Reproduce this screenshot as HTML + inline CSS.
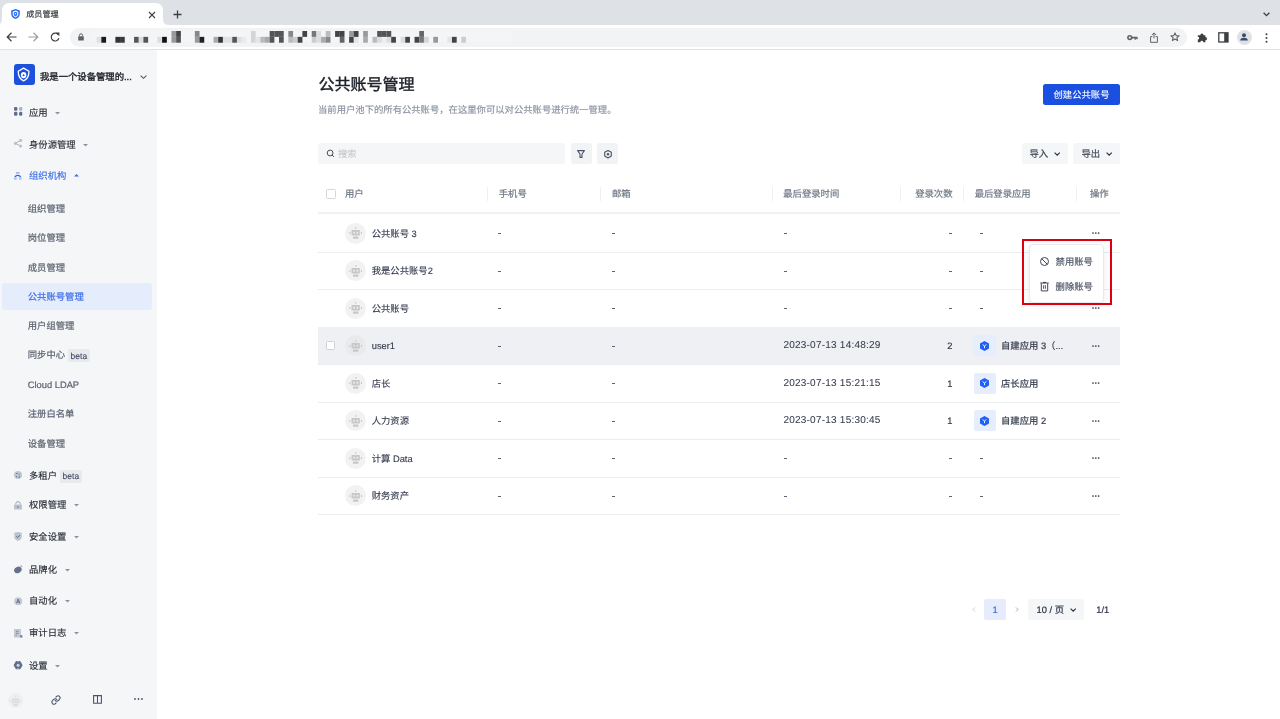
<!DOCTYPE html>
<html lang="zh-CN"><head><meta charset="utf-8"><title>成员管理</title>
<style>
html,body{margin:0;padding:0;width:1280px;height:719px;overflow:hidden;background:#fff;}
body{position:relative;font-family:"Liberation Sans",sans-serif;text-rendering:geometricPrecision;}
#root{position:absolute;left:0;top:0;width:1280px;height:719px;overflow:hidden;background:#fff;will-change:transform;}
.t{position:absolute;white-space:nowrap;}
.b{position:absolute;box-sizing:border-box;}
.s{position:absolute;overflow:visible;}
.d{letter-spacing:0.23px;font-size:10px;}
</style></head><body><div id="root">

<div class="b" style="left:0px;top:0px;width:1280px;height:25px;background:#dee1e6;border-radius:0px;"></div>
<div class="b" style="left:2px;top:2.5px;width:160.5px;height:24px;background:#fff;border-radius:7px 7px 0 0;"></div>
<svg class="s" style="left:-4px;top:19px;" width="6" height="6" viewBox="0 0 6 6"><path d="M0 6 Q6 6 6 0 V6 Z" fill="#fff"/></svg>
<svg class="s" style="left:162.5px;top:19px;" width="6" height="6" viewBox="0 0 6 6"><path d="M6 6 Q0 6 0 0 V6 Z" fill="#fff"/></svg>
<div class="b" style="left:0px;top:25px;width:1280px;height:24px;background:#fff;border-radius:0px;"></div>
<div class="b" style="left:0px;top:49px;width:1280px;height:1px;background:#e1e3e6;border-radius:0px;"></div>
<svg class="s" style="left:9.8px;top:8.0px;transform:scale(0.88);transform-origin:5.5px 5.5px;" width="11" height="12" viewBox="0 0 11 12"><path d="M5.5 0.3 L10.4 2.2 V6 C10.4 9 8.3 10.9 5.5 11.8 C2.7 10.9 0.6 9 0.6 6 V2.2 Z" fill="#2b6cf0"/><path d="M5.5 2.2 L8.7 3.4 V6.1 C8.7 8 7.4 9.3 5.5 10 C3.6 9.3 2.3 8 2.3 6.1 V3.4 Z" fill="#fff"/><path d="M5.5 3.6 L7.5 4.4 V6.2 C7.5 7.4 6.7 8.3 5.5 8.8 C4.3 8.3 3.5 7.4 3.5 6.2 V4.4 Z" fill="#2b6cf0"/><circle cx="5.5" cy="5.8" r="0.8" fill="#fff"/></svg>
<div class="t" style="left:26.20px;top:8.00px;font-size:8.1px;line-height:14px;color:#35383c;font-weight:400;-webkit-text-stroke:0.18px #35383c;">成员管理</div>
<svg class="s" style="left:148px;top:10.5px;" width="8" height="8" viewBox="0 0 8 8"><path d="M1 1 L7 7 M7 1 L1 7" stroke="#3c4043" stroke-width="1.1"/></svg>
<svg class="s" style="left:172.5px;top:9.5px;" width="9" height="9" viewBox="0 0 9 9"><path d="M4.5 0.5 V8.5 M0.5 4.5 H8.5" stroke="#3c4043" stroke-width="1.3"/></svg>
<svg class="s" style="left:1262.5px;top:11.8px;" width="7" height="5" viewBox="0 0 7 5"><path d="M0.6 0.8 L3.5 3.7 L6.4 0.8" stroke="#3c4043" stroke-width="1.3" fill="none"/></svg>
<svg class="s" style="left:6px;top:32px;" width="11" height="10" viewBox="0 0 11 10"><path d="M10.5 5 H1.5 M5.5 0.8 L1.2 5 L5.5 9.2" stroke="#3c4043" stroke-width="1.2" fill="none"/></svg>
<svg class="s" style="left:28px;top:32px;" width="11" height="10" viewBox="0 0 11 10"><path d="M0.5 5 H9.5 M5.5 0.8 L9.8 5 L5.5 9.2" stroke="#9aa0a6" stroke-width="1.2" fill="none"/></svg>
<svg class="s" style="left:49.5px;top:32px;" width="10" height="10" viewBox="0 0 10 10"><path d="M8.6 3.2 A3.9 3.9 0 1 0 8.9 6.2" stroke="#3c4043" stroke-width="1.2" fill="none"/><path d="M6 0.6 L9.4 0.6 L9.4 4 Z" fill="#3c4043"/></svg>
<div class="b" style="left:69.5px;top:28.2px;width:1117.5px;height:18.5px;background:#f1f3f4;border-radius:9.25px;"></div>
<svg class="s" style="left:78.2px;top:33.2px;" width="6" height="8" viewBox="0 0 6 8"><path d="M1.4 3.4 V2.4 A1.6 1.6 0 0 1 4.6 2.4 V3.4" stroke="#5f6368" stroke-width="1" fill="none"/><rect x="0.2" y="3.3" width="5.6" height="4.3" rx="0.7" fill="#5f6368"/></svg>
<div class="b" style="left:92px;top:31.1px;width:420px;height:11.4px;background:#f4f5f6;border-radius:0px;"></div>
<svg class="s" style="left:92px;top:31.1px;" width="380" height="12" viewBox="0 0 380 12"><rect x="4.67" y="5.85" width="4.72" height="5.87" fill="#e0e0e0"/><rect x="9.35" y="5.85" width="4.72" height="5.87" fill="#1a1a1a"/><rect x="23.38" y="5.85" width="4.72" height="5.87" fill="#333"/><rect x="28.05" y="5.85" width="4.72" height="5.87" fill="#3a3a3a"/><rect x="42.07" y="5.85" width="4.72" height="5.87" fill="#555"/><rect x="46.75" y="5.85" width="4.72" height="5.87" fill="#ddd"/><rect x="51.42" y="5.85" width="4.72" height="5.87" fill="#555"/><rect x="65.45" y="5.85" width="4.72" height="5.87" fill="#ddd"/><rect x="70.12" y="5.85" width="4.72" height="5.87" fill="#111"/><rect x="79.47" y="5.85" width="4.72" height="5.87" fill="#999"/><rect x="84.15" y="5.85" width="4.72" height="5.87" fill="#555"/><rect x="102.85" y="5.85" width="4.72" height="5.87" fill="#999"/><rect x="107.52" y="5.85" width="4.72" height="5.87" fill="#222"/><rect x="121.55" y="5.85" width="4.72" height="5.87" fill="#aaa"/><rect x="126.22" y="5.85" width="4.72" height="5.87" fill="#333"/><rect x="130.90" y="5.85" width="4.72" height="5.87" fill="#e0e0e0"/><rect x="135.57" y="5.85" width="4.72" height="5.87" fill="#e0e0e0"/><rect x="140.25" y="5.85" width="4.72" height="5.87" fill="#555"/><rect x="144.92" y="5.85" width="4.72" height="5.87" fill="#ddd"/><rect x="149.60" y="5.85" width="4.72" height="5.87" fill="#eaeaea"/><rect x="158.95" y="5.85" width="4.72" height="5.87" fill="#d5d5d5"/><rect x="163.62" y="5.85" width="4.72" height="5.87" fill="#e5e5e5"/><rect x="168.30" y="5.85" width="4.72" height="5.87" fill="#bbb"/><rect x="172.97" y="5.85" width="4.72" height="5.87" fill="#aaa"/><rect x="177.65" y="5.85" width="4.72" height="5.87" fill="#555"/><rect x="187.00" y="5.85" width="4.72" height="5.87" fill="#555"/><rect x="196.35" y="5.85" width="4.72" height="5.87" fill="#bbb"/><rect x="201.03" y="5.85" width="4.72" height="5.87" fill="#ccc"/><rect x="205.70" y="5.85" width="4.72" height="5.87" fill="#444"/><rect x="219.72" y="5.85" width="4.72" height="5.87" fill="#ccc"/><rect x="224.40" y="5.85" width="4.72" height="5.87" fill="#ddd"/><rect x="229.07" y="5.85" width="4.72" height="5.87" fill="#aaa"/><rect x="233.75" y="5.85" width="4.72" height="5.87" fill="#888"/><rect x="247.77" y="5.85" width="4.72" height="5.87" fill="#666"/><rect x="257.12" y="5.85" width="4.72" height="5.87" fill="#444"/><rect x="261.80" y="5.85" width="4.72" height="5.87" fill="#e5e5e5"/><rect x="271.15" y="5.85" width="4.72" height="5.87" fill="#aaa"/><rect x="280.50" y="5.85" width="4.72" height="5.87" fill="#bbb"/><rect x="285.18" y="5.85" width="4.72" height="5.87" fill="#ddd"/><rect x="289.85" y="5.85" width="4.72" height="5.87" fill="#eee"/><rect x="294.52" y="5.85" width="4.72" height="5.87" fill="#ddd"/><rect x="299.20" y="5.85" width="4.72" height="5.87" fill="#444"/><rect x="308.55" y="5.85" width="4.72" height="5.87" fill="#ddd"/><rect x="313.22" y="5.85" width="4.72" height="5.87" fill="#444"/><rect x="322.57" y="5.85" width="4.72" height="5.87" fill="#444"/><rect x="327.25" y="5.85" width="4.72" height="5.87" fill="#777"/><rect x="331.93" y="5.85" width="4.72" height="5.87" fill="#d5d5d5"/><rect x="341.27" y="5.85" width="4.72" height="5.87" fill="#999"/><rect x="355.30" y="5.85" width="4.72" height="5.87" fill="#e5e5e5"/><rect x="359.97" y="5.85" width="4.72" height="5.87" fill="#444"/><rect x="369.32" y="5.85" width="4.72" height="5.87" fill="#ccc"/><rect x="79.47" y="0" width="4.72" height="5.87" fill="#999"/><rect x="84.15" y="0" width="4.72" height="5.87" fill="#444"/><rect x="102.85" y="0" width="4.72" height="5.87" fill="#888"/><rect x="158.95" y="0" width="4.72" height="5.87" fill="#d5d5d5"/><rect x="177.65" y="0" width="4.72" height="5.87" fill="#555"/><rect x="182.32" y="0" width="4.72" height="5.87" fill="#555"/><rect x="187.00" y="0" width="4.72" height="5.87" fill="#555"/><rect x="196.35" y="0" width="4.72" height="5.87" fill="#888"/><rect x="210.38" y="0" width="4.72" height="5.87" fill="#444"/><rect x="219.72" y="0" width="4.72" height="5.87" fill="#777"/><rect x="224.40" y="0" width="4.72" height="5.87" fill="#ddd"/><rect x="233.75" y="0" width="4.72" height="5.87" fill="#bbb"/><rect x="243.10" y="0" width="4.72" height="5.87" fill="#444"/><rect x="247.77" y="0" width="4.72" height="5.87" fill="#444"/><rect x="257.12" y="0" width="4.72" height="5.87" fill="#999"/><rect x="261.80" y="0" width="4.72" height="5.87" fill="#444"/><rect x="271.15" y="0" width="4.72" height="5.87" fill="#999"/><rect x="285.18" y="0" width="4.72" height="5.87" fill="#555"/><rect x="289.85" y="0" width="4.72" height="5.87" fill="#555"/><rect x="294.52" y="0" width="4.72" height="5.87" fill="#555"/><rect x="327.25" y="0" width="4.72" height="5.87" fill="#666"/></svg>
<svg class="s" style="left:1127px;top:33.6px;" width="11" height="8" viewBox="0 0 11 8"><circle cx="2.8" cy="3.6" r="1.9" stroke="#5f6368" stroke-width="1.6" fill="none"/><path d="M4.6 3.6 H10.4" stroke="#5f6368" stroke-width="1.7"/><path d="M8.2 3.6 V5.8 M10 3.6 V5.2" stroke="#5f6368" stroke-width="1.3"/></svg>
<svg class="s" style="left:1149.5px;top:32px;" width="8" height="11" viewBox="0 0 8 11"><path d="M4 6.4 V1 M1.9 3 L4 0.9 L6.1 3" stroke="#5f6368" stroke-width="1" fill="none"/><path d="M2.4 4.6 H0.6 V10.3 H7.4 V4.6 H5.6" stroke="#5f6368" stroke-width="1" fill="none"/></svg>
<svg class="s" style="left:1170px;top:32.3px;" width="10" height="10" viewBox="0 0 10 10"><path d="M5 0.9 L6.2 3.6 L9.1 3.8 L6.9 5.7 L7.6 8.6 L5 7.1 L2.4 8.6 L3.1 5.7 L0.9 3.8 L3.8 3.6 Z" stroke="#5f6368" stroke-width="1.1" fill="none" stroke-linejoin="round"/></svg>
<svg class="s" style="left:1196.5px;top:32.2px;" width="11" height="11" viewBox="0 0 11 11"><path d="M0.8 3.2 H3.3 A1.6 1.6 0 1 1 6.5 3.2 H8.4 V5.1 A1.6 1.6 0 1 1 8.4 8.3 V10.2 H6.2 A1.4 1.4 0 1 0 3.4 10.2 H0.8 V7.6 A1.4 1.4 0 1 0 0.8 4.8 Z" fill="#3c4043"/></svg>
<svg class="s" style="left:1217.8px;top:32.3px;" width="11" height="11" viewBox="0 0 11 11"><rect x="0.8" y="0.8" width="9.2" height="9.2" stroke="#3c4043" stroke-width="1.3" fill="none"/><rect x="6.2" y="0.8" width="3.8" height="9.2" fill="#3c4043"/></svg>
<div class="b" style="left:1236.9px;top:29.9px;width:15px;height:15px;border-radius:50%;background:#dfe1e5;"></div>
<svg class="s" style="left:1239.4px;top:32.4px;" width="10" height="10" viewBox="0 0 10 10"><circle cx="5" cy="3.2" r="2" fill="#394a6d"/><path d="M1.2 8.4 C1.2 6.4 3 5.7 5 5.7 C7 5.7 8.8 6.4 8.8 8.4 Z" fill="#394a6d"/></svg>
<svg class="s" style="left:1264.5px;top:32.5px;" width="3" height="11" viewBox="0 0 3 11"><circle cx="1.5" cy="1.2" r="1" fill="#3c4043"/><circle cx="1.5" cy="5" r="1" fill="#3c4043"/><circle cx="1.5" cy="8.8" r="1" fill="#3c4043"/></svg>
<div class="b" style="left:0px;top:50px;width:157px;height:669px;background:#f5f6f8;border-radius:0px;"></div>
<div class="b" style="left:13.5px;top:64px;width:21.3px;height:21.3px;background:#1d50dc;border-radius:3px;"></div>
<svg class="s" style="left:13.4px;top:64.1px;" width="21.4" height="21.2" viewBox="0 0 21.4 21.2"><path d="M10.6 4.1 L16 7.3 C16 12 14 15.4 10.6 16.9 C7.2 15.4 5.2 12 5.2 7.3 Z" stroke="#fff" stroke-width="1.3" fill="none" stroke-linejoin="round"/><ellipse cx="10.6" cy="11.1" rx="2.7" ry="3.2" fill="#fff"/><circle cx="10.6" cy="11.2" r="1" fill="#1d50dc"/></svg>
<div class="t" style="left:40.00px;top:69.70px;font-size:9.33px;line-height:14px;color:#1f2329;font-weight:400;-webkit-text-stroke:0.38px #1f2329;">我是一个设备管理的...</div>
<svg class="s" style="left:140px;top:74.6px;" width="7" height="4" viewBox="0 0 7 4"><path d="M0.6 0.6 L3.5 3.3 L6.4 0.6" stroke="#4e5565" stroke-width="1.1" fill="none"/></svg>
<div class="t" style="left:29.00px;top:105.90px;font-size:9.33px;line-height:14px;color:#2b2f38;font-weight:400;-webkit-text-stroke:0.15px #2b2f38;">应用</div>
<svg class="s" style="left:13.8px;top:107.1px;" width="9" height="9" viewBox="0 0 9 9"><rect x="0" y="0" width="3.4" height="3.7" rx="1.3" fill="#5f6d8c"/><rect x="5.1" y="0" width="3.2" height="3.7" rx="1.3" fill="#a9b1c3"/><rect x="0" y="4.8" width="3.4" height="3.9" rx="1.3" fill="#5f6d8c"/><rect x="5.1" y="4.8" width="3.2" height="3.9" rx="1.3" fill="#5f6d8c"/></svg>
<svg class="s" style="left:55.0px;top:111.7px;" width="5" height="3" viewBox="0 0 5 3"><path d="M0 0 H5 L2.5 2.6 Z" fill="#8a93a6"/></svg>
<div class="t" style="left:29.00px;top:137.80px;font-size:9.33px;line-height:14px;color:#2b2f38;font-weight:400;-webkit-text-stroke:0.15px #2b2f38;">身份源管理</div>
<svg class="s" style="left:13.8px;top:139.3px;" width="9" height="9" viewBox="0 0 9 9"><path d="M1.3 4.3 L6.6 1.3 M1.3 4.3 L6.6 7" stroke="#98a1b3" stroke-width="0.8"/><circle cx="1.4" cy="4.3" r="1.6" fill="#b9c0ce"/><circle cx="6.6" cy="1.3" r="1.6" fill="#b9c0ce"/><circle cx="6.6" cy="7" r="1.6" fill="#b9c0ce"/></svg>
<svg class="s" style="left:83.0px;top:143.6px;" width="5" height="3" viewBox="0 0 5 3"><path d="M0 0 H5 L2.5 2.6 Z" fill="#8a93a6"/></svg>
<div class="t" style="left:29.00px;top:169.40px;font-size:9.33px;line-height:14px;color:#3f6fe8;font-weight:400;-webkit-text-stroke:0.15px #3f6fe8;">组织机构</div>
<svg class="s" style="left:14.2px;top:172.1px;" width="9" height="9" viewBox="0 0 9 9"><rect x="1.8" y="0" width="3.9" height="1.7" rx="0.4" fill="#a3b8f3"/><path d="M1.2 4.5 Q3.75 2.3 6.3 4.5" stroke="#2f62e8" stroke-width="1.3" fill="none" stroke-linecap="round"/><rect x="0" y="5.2" width="2.7" height="2.5" rx="0.4" fill="#adc1f5"/><rect x="4.9" y="5.2" width="2.7" height="2.5" rx="0.4" fill="#adc1f5"/></svg>
<svg class="s" style="left:73.5px;top:174.2px;" width="5" height="3" viewBox="0 0 5 3"><path d="M0 2.6 H5 L2.5 0 Z" fill="#3f6fe8"/></svg>
<div class="t" style="left:29.00px;top:469.00px;font-size:9.33px;line-height:14px;color:#2b2f38;font-weight:400;-webkit-text-stroke:0.15px #2b2f38;">多租户</div>
<svg class="s" style="left:14px;top:470.7px;" width="9" height="9" viewBox="0 0 9 9"><circle cx="4" cy="4" r="4" fill="#bfc5d1"/><path d="M2.2 2.5 L3.4 2.5 M4.8 3.2 L5.6 3.2 M2 5.8 L3 5.8 M4.6 6.2 L6 5.8" stroke="#5a6686" stroke-width="1.1"/></svg>
<div class="t" style="left:29.00px;top:498.40px;font-size:9.33px;line-height:14px;color:#2b2f38;font-weight:400;-webkit-text-stroke:0.15px #2b2f38;">权限管理</div>
<svg class="s" style="left:14px;top:500.8px;" width="9" height="9" viewBox="0 0 9 9"><path d="M1.8 3.6 V2.8 A2.2 2.2 0 0 1 6.2 2.8 V3.6" stroke="#9aa2b3" stroke-width="1" fill="none"/><rect x="0" y="3.6" width="8" height="5" rx="0.5" fill="#bcc3cf"/><path d="M4 5 V7" stroke="#6c7690" stroke-width="1"/></svg>
<svg class="s" style="left:73.5px;top:504.2px;" width="5" height="3" viewBox="0 0 5 3"><path d="M0 0 H5 L2.5 2.6 Z" fill="#8a93a6"/></svg>
<div class="t" style="left:29.00px;top:530.40px;font-size:9.33px;line-height:14px;color:#2b2f38;font-weight:400;-webkit-text-stroke:0.15px #2b2f38;">安全设置</div>
<svg class="s" style="left:14.2px;top:532.3px;" width="9" height="9" viewBox="0 0 9 9"><path d="M0.3 0.8 L4 0 L7.7 0.8 V5 C7.7 7 5.8 8.3 4 9 C2.2 8.3 0.3 7 0.3 5 Z" fill="#bcc3cf"/><path d="M2.2 4.3 L3.6 5.6 L5.9 3.2" stroke="#5c6888" stroke-width="1" fill="none"/></svg>
<svg class="s" style="left:73.5px;top:536.2px;" width="5" height="3" viewBox="0 0 5 3"><path d="M0 0 H5 L2.5 2.6 Z" fill="#8a93a6"/></svg>
<div class="t" style="left:29.00px;top:562.80px;font-size:9.33px;line-height:14px;color:#2b2f38;font-weight:400;-webkit-text-stroke:0.15px #2b2f38;">品牌化</div>
<svg class="s" style="left:13.6px;top:565px;" width="9" height="9" viewBox="0 0 9 9"><ellipse cx="3.9" cy="4.9" rx="3.9" ry="3.1" transform="rotate(-28 3.9 4.9)" fill="#66718f"/><circle cx="7.3" cy="1.2" r="1" fill="#aab2c2"/></svg>
<svg class="s" style="left:64.5px;top:568.6px;" width="5" height="3" viewBox="0 0 5 3"><path d="M0 0 H5 L2.5 2.6 Z" fill="#8a93a6"/></svg>
<div class="t" style="left:29.00px;top:594.40px;font-size:9.33px;line-height:14px;color:#2b2f38;font-weight:400;-webkit-text-stroke:0.15px #2b2f38;">自动化</div>
<svg class="s" style="left:13.8px;top:596.8px;" width="9" height="9" viewBox="0 0 9 9"><circle cx="4.2" cy="4.2" r="4" fill="#c3c8d3"/><path d="M2.6 6.3 L4.2 2.1 L5.8 6.3 M3.2 5 H5.2" stroke="#5a6686" stroke-width="0.9" fill="none"/></svg>
<svg class="s" style="left:64.5px;top:600.2px;" width="5" height="3" viewBox="0 0 5 3"><path d="M0 0 H5 L2.5 2.6 Z" fill="#8a93a6"/></svg>
<div class="t" style="left:29.00px;top:626.40px;font-size:9.33px;line-height:14px;color:#2b2f38;font-weight:400;-webkit-text-stroke:0.15px #2b2f38;">审计日志</div>
<svg class="s" style="left:14px;top:629px;" width="9" height="9" viewBox="0 0 9 9"><rect x="0" y="0" width="7" height="8.5" rx="0.3" fill="#c3c8d3"/><path d="M2 2.3 H4.5 M2 4.3 H4.5 M1.6 6.3 H2.8" stroke="#7c869c" stroke-width="0.9"/><rect x="6.2" y="6.3" width="2.2" height="2.2" rx="0.5" fill="#6b7694"/></svg>
<svg class="s" style="left:73.5px;top:632.2px;" width="5" height="3" viewBox="0 0 5 3"><path d="M0 0 H5 L2.5 2.6 Z" fill="#8a93a6"/></svg>
<div class="t" style="left:29.00px;top:659.00px;font-size:9.33px;line-height:14px;color:#2b2f38;font-weight:400;-webkit-text-stroke:0.15px #2b2f38;">设置</div>
<svg class="s" style="left:14px;top:661.4px;" width="9" height="9" viewBox="0 0 9 9"><path d="M2.3 0.6 H5.9 L8 4.2 L5.9 7.8 H2.3 L0.2 4.2 Z" fill="#5f6d8c" stroke="#5f6d8c" stroke-width="1.1" stroke-linejoin="round"/><path d="M4.1 0 V1.2 M4.1 7.2 V8.4" stroke="#f5f6f8" stroke-width="0.7"/><circle cx="4.1" cy="4.2" r="1.5" fill="#d5d9e2"/></svg>
<svg class="s" style="left:55.0px;top:664.8000000000001px;" width="5" height="3" viewBox="0 0 5 3"><path d="M0 0 H5 L2.5 2.6 Z" fill="#8a93a6"/></svg>
<div class="b" style="left:59.5px;top:469.8px;width:22.5px;height:13.1px;background:#e8eaee;border-radius:2px;"></div>
<div class="t" style="left:62.60px;top:469.30px;font-size:8.5px;line-height:14px;color:#404860;font-weight:400;-webkit-text-stroke:0.1px #404860;">beta</div>
<div class="b" style="left:2px;top:283px;width:150px;height:26.8px;background:#e5ecfb;border-radius:3px;"></div>
<div class="t" style="left:27.75px;top:201.90px;font-size:9.33px;line-height:14px;color:#5c6370;font-weight:400;-webkit-text-stroke:0.2px #5c6370;">组织管理</div>
<div class="t" style="left:27.75px;top:231.40px;font-size:9.33px;line-height:14px;color:#5c6370;font-weight:400;-webkit-text-stroke:0.2px #5c6370;">岗位管理</div>
<div class="t" style="left:27.75px;top:260.90px;font-size:9.33px;line-height:14px;color:#5c6370;font-weight:400;-webkit-text-stroke:0.2px #5c6370;">成员管理</div>
<div class="t" style="left:27.75px;top:290.40px;font-size:9.33px;line-height:14px;color:#3f6fe8;font-weight:400;-webkit-text-stroke:0.2px #3f6fe8;">公共账号管理</div>
<div class="t" style="left:27.75px;top:319.40px;font-size:9.33px;line-height:14px;color:#5c6370;font-weight:400;-webkit-text-stroke:0.2px #5c6370;">用户组管理</div>
<div class="t" style="left:27.75px;top:348.40px;font-size:9.33px;line-height:14px;color:#5c6370;font-weight:400;-webkit-text-stroke:0.2px #5c6370;">同步中心</div>
<div class="t" style="left:27.75px;top:378.40px;font-size:9.33px;line-height:14px;color:#5c6370;font-weight:400;-webkit-text-stroke:0.2px #5c6370;">Cloud LDAP</div>
<div class="t" style="left:27.75px;top:407.40px;font-size:9.33px;line-height:14px;color:#5c6370;font-weight:400;-webkit-text-stroke:0.2px #5c6370;">注册白名单</div>
<div class="t" style="left:27.75px;top:436.90px;font-size:9.33px;line-height:14px;color:#5c6370;font-weight:400;-webkit-text-stroke:0.2px #5c6370;">设备管理</div>
<div class="b" style="left:67.5px;top:349.4px;width:22.3px;height:13.1px;background:#e8eaee;border-radius:2px;"></div>
<div class="t" style="left:70.60px;top:348.90px;font-size:8.5px;line-height:14px;color:#404860;font-weight:400;-webkit-text-stroke:0.1px #404860;">beta</div>
<div class="b" style="left:7.9px;top:692.5px;width:15px;height:15px;border-radius:50%;background:#eeeff1;"></div>
<svg class="s" style="left:9.3px;top:694.6px;transform:scale(0.85);transform-origin:6.5px 6px;" width="13" height="12" viewBox="0 0 13 12"><rect x="6" y="0.2" width="1.3" height="1.4" fill="#dcdcde"/><rect x="2.5" y="3" width="8.3" height="5.6" rx="0.5" fill="#dcdcde"/><rect x="4.3" y="4.8" width="1.5" height="1.8" fill="#eeeff1"/><rect x="7.6" y="4.8" width="1.5" height="1.8" fill="#eeeff1"/><rect x="0.3" y="5" width="1.1" height="2" rx="0.3" fill="#dcdcde"/><rect x="11.9" y="5" width="1.1" height="2" rx="0.3" fill="#dcdcde"/><rect x="4" y="9.4" width="5.4" height="2.4" rx="0.5" fill="#dcdcde"/></svg>
<svg class="s" style="left:51.2px;top:694.8px" width="10" height="10" viewBox="0 0 24 24"><path d="M10 13a5 5 0 0 0 7.54.54l3-3a5 5 0 0 0-7.07-7.07l-1.72 1.71" stroke="#4a5470" stroke-width="2.6" fill="none" stroke-linecap="round"/><path d="M14 11a5 5 0 0 0-7.54-.54l-3 3a5 5 0 0 0 7.07 7.07l1.71-1.71" stroke="#4a5470" stroke-width="2.6" fill="none" stroke-linecap="round"/></svg>
<svg class="s" style="left:93px;top:695.3px;" width="9" height="9" viewBox="0 0 9 9"><path d="M0.6 0.6 H8.4 V8.2 H0.6 Z M4.5 0.6 V8.8" stroke="#4a5470" stroke-width="1.1" fill="none"/></svg>
<svg class="s" style="left:134px;top:698.3px;" width="9" height="2" viewBox="0 0 9 2"><circle cx="1" cy="1" r="0.9" fill="#4a5470"/><circle cx="4.5" cy="1" r="0.9" fill="#4a5470"/><circle cx="8" cy="1" r="0.9" fill="#4a5470"/></svg>
<div class="t" style="left:318.50px;top:75.40px;font-size:16px;line-height:22px;color:#1d2129;font-weight:400;-webkit-text-stroke:0.42px #1d2129;">公共账号管理</div>
<div class="t" style="left:318.00px;top:103.00px;font-size:9.33px;line-height:14px;color:#8a919f;font-weight:400;-webkit-text-stroke:0.15px #8a919f;">当前用户池下的所有公共账号，在这里你可以对公共账号进行统一管理。</div>
<div class="b" style="left:1042.7px;top:83.5px;width:77.3px;height:21.3px;background:#1a4fdf;border-radius:2.5px;"></div>
<div class="t" style="left:1053.50px;top:87.70px;font-size:9.33px;line-height:14px;color:#fff;font-weight:400;-webkit-text-stroke:0.1px #fff;">创建公共账号</div>
<div class="b" style="left:318px;top:143.3px;width:247px;height:20.7px;background:#f5f6f8;border-radius:2.5px;"></div>
<svg class="s" style="left:325.5px;top:149px;" width="9" height="9" viewBox="0 0 9 9"><circle cx="4.1" cy="4" r="2.9" stroke="#4d4f55" stroke-width="1" fill="none"/><path d="M6.2 6.1 L7.8 7.7" stroke="#4d4f55" stroke-width="1" stroke-linecap="round"/></svg>
<div class="t" style="left:338.00px;top:147.00px;font-size:9.33px;line-height:14px;color:#c2c4c8;font-weight:400;-webkit-text-stroke:0.05px #c2c4c8;">搜索</div>
<div class="b" style="left:570.9px;top:143.3px;width:20.7px;height:20.7px;background:#f2f3f5;border-radius:2.5px;"></div>
<div class="b" style="left:597.4px;top:143.3px;width:21px;height:20.7px;background:#f2f3f5;border-radius:2.5px;"></div>
<svg class="s" style="left:577.3px;top:149.8px;" width="8" height="8" viewBox="0 0 8 8"><path d="M0.6 0.6 H7.4 L5 4 V7.4 H3 V4 Z" stroke="#4a5268" stroke-width="1.1" fill="none" stroke-linejoin="round"/></svg>
<svg class="s" style="left:603.8px;top:149.6px;" width="8" height="8.5" viewBox="0 0 8 8.5"><path d="M4 0.5 L7.3 2.3 V6.1 L4 7.9 L0.7 6.1 V2.3 Z" stroke="#4a5268" stroke-width="1.1" fill="none" stroke-linejoin="round"/><circle cx="4" cy="4.2" r="1.2" fill="#4a5268"/></svg>
<div class="b" style="left:1021.5px;top:143.3px;width:46.4px;height:20.7px;background:#f5f6f8;border-radius:2.5px;"></div>
<div class="b" style="left:1073.4px;top:143.3px;width:46.6px;height:20.7px;background:#f5f6f8;border-radius:2.5px;"></div>
<svg class="s" style="left:1053.5px;top:152px;" width="6.5" height="4" viewBox="0 0 6.5 4"><path d="M0.6 0.6 L3.2 3.1 L5.8 0.6" stroke="#2d3446" stroke-width="1.2" fill="none"/></svg>
<svg class="s" style="left:1105.5px;top:152px;" width="6.5" height="4" viewBox="0 0 6.5 4"><path d="M0.6 0.6 L3.2 3.1 L5.8 0.6" stroke="#2d3446" stroke-width="1.2" fill="none"/></svg>
<div class="t" style="left:1029.50px;top:147.00px;font-size:9.33px;line-height:14px;color:#444b59;font-weight:400;-webkit-text-stroke:0.2px #444b59;">导入</div>
<div class="t" style="left:1081.50px;top:147.00px;font-size:9.33px;line-height:14px;color:#444b59;font-weight:400;-webkit-text-stroke:0.2px #444b59;">导出</div>
<div class="t" style="left:345.00px;top:187.15px;font-size:9.33px;line-height:14px;color:#6f7785;font-weight:400;-webkit-text-stroke:0.2px #6f7785;">用户</div>
<div class="t" style="left:498.75px;top:187.15px;font-size:9.33px;line-height:14px;color:#6f7785;font-weight:400;-webkit-text-stroke:0.2px #6f7785;">手机号</div>
<div class="t" style="left:612.00px;top:187.15px;font-size:9.33px;line-height:14px;color:#6f7785;font-weight:400;-webkit-text-stroke:0.2px #6f7785;">邮箱</div>
<div class="t" style="left:783.25px;top:187.15px;font-size:9.33px;line-height:14px;color:#6f7785;font-weight:400;-webkit-text-stroke:0.2px #6f7785;">最后登录时间</div>
<div class="t" style="right:327.50px;top:187.15px;font-size:9.33px;line-height:14px;color:#6f7785;font-weight:400;-webkit-text-stroke:0.2px #6f7785;">登录次数</div>
<div class="t" style="left:974.70px;top:187.15px;font-size:9.33px;line-height:14px;color:#6f7785;font-weight:400;-webkit-text-stroke:0.2px #6f7785;">最后登录应用</div>
<div class="t" style="left:1090.00px;top:187.15px;font-size:9.33px;line-height:14px;color:#6f7785;font-weight:400;-webkit-text-stroke:0.2px #6f7785;">操作</div>
<div class="b" style="left:487px;top:186.5px;width:1px;height:14px;background:#eef0f3;border-radius:0px;"></div>
<div class="b" style="left:600px;top:186.5px;width:1px;height:14px;background:#eef0f3;border-radius:0px;"></div>
<div class="b" style="left:772px;top:186.5px;width:1px;height:14px;background:#eef0f3;border-radius:0px;"></div>
<div class="b" style="left:900px;top:186.5px;width:1px;height:14px;background:#eef0f3;border-radius:0px;"></div>
<div class="b" style="left:963px;top:186.5px;width:1px;height:14px;background:#eef0f3;border-radius:0px;"></div>
<div class="b" style="left:1076px;top:186.5px;width:1px;height:14px;background:#eef0f3;border-radius:0px;"></div>
<div class="b" style="left:318px;top:212.3px;width:802px;height:2px;background:#f0f2f5;border-radius:0px;"></div>
<div class="b" style="left:318px;top:251.5px;width:802px;height:0.7px;background:#ebedf0;border-radius:0px;"></div>
<div class="b" style="left:344.7px;top:222.75px;width:21px;height:21px;border-radius:50%;background:#f2f2f3;"></div>
<svg class="s" style="left:348.6px;top:227.05px;" width="13" height="12" viewBox="0 0 13 12"><rect x="6" y="0.2" width="1.3" height="1.4" fill="#c6c7c9"/><rect x="2.5" y="3" width="8.3" height="5.6" rx="0.5" fill="#c6c7c9"/><rect x="4.3" y="4.8" width="1.5" height="1.8" fill="#f2f2f3"/><rect x="7.6" y="4.8" width="1.5" height="1.8" fill="#f2f2f3"/><rect x="0.3" y="5" width="1.1" height="2" rx="0.3" fill="#c6c7c9"/><rect x="11.9" y="5" width="1.1" height="2" rx="0.3" fill="#c6c7c9"/><rect x="4" y="9.4" width="5.4" height="2.4" rx="0.5" fill="#c6c7c9"/></svg>
<div class="t" style="left:371.70px;top:226.65px;font-size:9.33px;line-height:14px;color:#343b4d;font-weight:400;-webkit-text-stroke:0.12px #343b4d;">公共账号 3</div>
<div class="b" style="left:498.4px;top:233.1px;width:3.1px;height:1.1px;background:#5a6172;border-radius:0px;"></div>
<div class="b" style="left:612.4000000000001px;top:233.1px;width:3.1px;height:1.1px;background:#5a6172;border-radius:0px;"></div>
<div class="b" style="left:783.6px;top:233.1px;width:3.1px;height:1.1px;background:#5a6172;border-radius:0px;"></div>
<div class="b" style="left:949.2px;top:233.1px;width:3.1px;height:1.1px;background:#5a6172;border-radius:0px;"></div>
<div class="b" style="left:980.2px;top:233.1px;width:3.1px;height:1.1px;background:#5a6172;border-radius:0px;"></div>
<svg class="s" style="left:1092.3px;top:232.35px;" width="8" height="2" viewBox="0 0 8 2"><circle cx="1" cy="1" r="0.85" fill="#2d3446"/><circle cx="3.8" cy="1" r="0.85" fill="#2d3446"/><circle cx="6.6" cy="1" r="0.85" fill="#2d3446"/></svg>
<div class="b" style="left:318px;top:289.0px;width:802px;height:0.7px;background:#ebedf0;border-radius:0px;"></div>
<div class="b" style="left:344.7px;top:260.25px;width:21px;height:21px;border-radius:50%;background:#f2f2f3;"></div>
<svg class="s" style="left:348.6px;top:264.55px;" width="13" height="12" viewBox="0 0 13 12"><rect x="6" y="0.2" width="1.3" height="1.4" fill="#c6c7c9"/><rect x="2.5" y="3" width="8.3" height="5.6" rx="0.5" fill="#c6c7c9"/><rect x="4.3" y="4.8" width="1.5" height="1.8" fill="#f2f2f3"/><rect x="7.6" y="4.8" width="1.5" height="1.8" fill="#f2f2f3"/><rect x="0.3" y="5" width="1.1" height="2" rx="0.3" fill="#c6c7c9"/><rect x="11.9" y="5" width="1.1" height="2" rx="0.3" fill="#c6c7c9"/><rect x="4" y="9.4" width="5.4" height="2.4" rx="0.5" fill="#c6c7c9"/></svg>
<div class="t" style="left:371.70px;top:264.15px;font-size:9.33px;line-height:14px;color:#343b4d;font-weight:400;-webkit-text-stroke:0.12px #343b4d;">我是公共账号2</div>
<div class="b" style="left:498.4px;top:270.6px;width:3.1px;height:1.1px;background:#5a6172;border-radius:0px;"></div>
<div class="b" style="left:612.4000000000001px;top:270.6px;width:3.1px;height:1.1px;background:#5a6172;border-radius:0px;"></div>
<div class="b" style="left:783.6px;top:270.6px;width:3.1px;height:1.1px;background:#5a6172;border-radius:0px;"></div>
<div class="b" style="left:949.2px;top:270.6px;width:3.1px;height:1.1px;background:#5a6172;border-radius:0px;"></div>
<div class="b" style="left:980.2px;top:270.6px;width:3.1px;height:1.1px;background:#5a6172;border-radius:0px;"></div>
<svg class="s" style="left:1092.3px;top:269.85px;" width="8" height="2" viewBox="0 0 8 2"><circle cx="1" cy="1" r="0.85" fill="#2d3446"/><circle cx="3.8" cy="1" r="0.85" fill="#2d3446"/><circle cx="6.6" cy="1" r="0.85" fill="#2d3446"/></svg>
<div class="b" style="left:318px;top:326.5px;width:802px;height:0.7px;background:#ebedf0;border-radius:0px;"></div>
<div class="b" style="left:344.7px;top:297.75px;width:21px;height:21px;border-radius:50%;background:#f2f2f3;"></div>
<svg class="s" style="left:348.6px;top:302.05px;" width="13" height="12" viewBox="0 0 13 12"><rect x="6" y="0.2" width="1.3" height="1.4" fill="#c6c7c9"/><rect x="2.5" y="3" width="8.3" height="5.6" rx="0.5" fill="#c6c7c9"/><rect x="4.3" y="4.8" width="1.5" height="1.8" fill="#f2f2f3"/><rect x="7.6" y="4.8" width="1.5" height="1.8" fill="#f2f2f3"/><rect x="0.3" y="5" width="1.1" height="2" rx="0.3" fill="#c6c7c9"/><rect x="11.9" y="5" width="1.1" height="2" rx="0.3" fill="#c6c7c9"/><rect x="4" y="9.4" width="5.4" height="2.4" rx="0.5" fill="#c6c7c9"/></svg>
<div class="t" style="left:371.70px;top:301.65px;font-size:9.33px;line-height:14px;color:#343b4d;font-weight:400;-webkit-text-stroke:0.12px #343b4d;">公共账号</div>
<div class="b" style="left:498.4px;top:308.1px;width:3.1px;height:1.1px;background:#5a6172;border-radius:0px;"></div>
<div class="b" style="left:612.4000000000001px;top:308.1px;width:3.1px;height:1.1px;background:#5a6172;border-radius:0px;"></div>
<div class="b" style="left:783.6px;top:308.1px;width:3.1px;height:1.1px;background:#5a6172;border-radius:0px;"></div>
<div class="b" style="left:949.2px;top:308.1px;width:3.1px;height:1.1px;background:#5a6172;border-radius:0px;"></div>
<div class="b" style="left:980.2px;top:308.1px;width:3.1px;height:1.1px;background:#5a6172;border-radius:0px;"></div>
<svg class="s" style="left:1092.3px;top:307.35px;" width="8" height="2" viewBox="0 0 8 2"><circle cx="1" cy="1" r="0.85" fill="#2d3446"/><circle cx="3.8" cy="1" r="0.85" fill="#2d3446"/><circle cx="6.6" cy="1" r="0.85" fill="#2d3446"/></svg>
<div class="b" style="left:318px;top:327.0px;width:802px;height:37.5px;background:#eff0f3;border-radius:0px;"></div>
<div class="b" style="left:318px;top:364.0px;width:802px;height:0.7px;background:#ebedf0;border-radius:0px;"></div>
<div class="b" style="left:344.7px;top:335.25px;width:21px;height:21px;border-radius:50%;background:#e9eaec;"></div>
<svg class="s" style="left:348.6px;top:339.55px;" width="13" height="12" viewBox="0 0 13 12"><rect x="6" y="0.2" width="1.3" height="1.4" fill="#c6c7c9"/><rect x="2.5" y="3" width="8.3" height="5.6" rx="0.5" fill="#c6c7c9"/><rect x="4.3" y="4.8" width="1.5" height="1.8" fill="#e9eaec"/><rect x="7.6" y="4.8" width="1.5" height="1.8" fill="#e9eaec"/><rect x="0.3" y="5" width="1.1" height="2" rx="0.3" fill="#c6c7c9"/><rect x="11.9" y="5" width="1.1" height="2" rx="0.3" fill="#c6c7c9"/><rect x="4" y="9.4" width="5.4" height="2.4" rx="0.5" fill="#c6c7c9"/></svg>
<div class="t" style="left:371.70px;top:339.15px;font-size:9.33px;line-height:14px;color:#343b4d;font-weight:400;-webkit-text-stroke:0.12px #343b4d;">user1</div>
<div class="b" style="left:498.4px;top:345.6px;width:3.1px;height:1.1px;background:#5a6172;border-radius:0px;"></div>
<div class="b" style="left:612.4000000000001px;top:345.6px;width:3.1px;height:1.1px;background:#5a6172;border-radius:0px;"></div>
<div class="t" style="left:783.40px;top:338.45px;font-size:9.33px;line-height:14px;color:#343b4d;font-weight:400;-webkit-text-stroke:0.06px #343b4d;"><span class="d">2023-07-13 14:48:29</span></div>
<div class="t" style="right:327.50px;top:339.15px;font-size:9.33px;line-height:14px;color:#343b4d;font-weight:400;-webkit-text-stroke:0.2px #343b4d;">2</div>
<div class="b" style="left:974.3px;top:335.15px;width:21.4px;height:21.2px;background:#e6edfd;border-radius:2px;"></div>
<svg class="s" style="left:980.3px;top:340.55px;" width="9" height="10" viewBox="0 0 9 10"><path d="M4.5 0 L9 2.5 V7.5 L4.5 10 L0 7.5 V2.5 Z" fill="#2260f5"/><path d="M2.6 3.6 L4.5 5 L6.4 3.6 M4.5 5 V7.2" stroke="#fff" stroke-width="0.9" fill="none"/></svg>
<div class="t" style="left:1001.00px;top:339.15px;font-size:9.33px;line-height:14px;color:#343b4d;font-weight:400;-webkit-text-stroke:0.2px #343b4d;">自建应用 3（...</div>
<svg class="s" style="left:1092.3px;top:344.85px;" width="8" height="2" viewBox="0 0 8 2"><circle cx="1" cy="1" r="0.85" fill="#2d3446"/><circle cx="3.8" cy="1" r="0.85" fill="#2d3446"/><circle cx="6.6" cy="1" r="0.85" fill="#2d3446"/></svg>
<div class="b" style="left:318px;top:401.5px;width:802px;height:0.7px;background:#ebedf0;border-radius:0px;"></div>
<div class="b" style="left:344.7px;top:372.75px;width:21px;height:21px;border-radius:50%;background:#f2f2f3;"></div>
<svg class="s" style="left:348.6px;top:377.05px;" width="13" height="12" viewBox="0 0 13 12"><rect x="6" y="0.2" width="1.3" height="1.4" fill="#c6c7c9"/><rect x="2.5" y="3" width="8.3" height="5.6" rx="0.5" fill="#c6c7c9"/><rect x="4.3" y="4.8" width="1.5" height="1.8" fill="#f2f2f3"/><rect x="7.6" y="4.8" width="1.5" height="1.8" fill="#f2f2f3"/><rect x="0.3" y="5" width="1.1" height="2" rx="0.3" fill="#c6c7c9"/><rect x="11.9" y="5" width="1.1" height="2" rx="0.3" fill="#c6c7c9"/><rect x="4" y="9.4" width="5.4" height="2.4" rx="0.5" fill="#c6c7c9"/></svg>
<div class="t" style="left:371.70px;top:376.65px;font-size:9.33px;line-height:14px;color:#343b4d;font-weight:400;-webkit-text-stroke:0.12px #343b4d;">店长</div>
<div class="b" style="left:498.4px;top:383.1px;width:3.1px;height:1.1px;background:#5a6172;border-radius:0px;"></div>
<div class="b" style="left:612.4000000000001px;top:383.1px;width:3.1px;height:1.1px;background:#5a6172;border-radius:0px;"></div>
<div class="t" style="left:783.40px;top:375.95px;font-size:9.33px;line-height:14px;color:#343b4d;font-weight:400;-webkit-text-stroke:0.06px #343b4d;"><span class="d">2023-07-13 15:21:15</span></div>
<div class="t" style="right:327.50px;top:376.65px;font-size:9.33px;line-height:14px;color:#343b4d;font-weight:400;-webkit-text-stroke:0.2px #343b4d;">1</div>
<div class="b" style="left:974.3px;top:372.65px;width:21.4px;height:21.2px;background:#e6edfd;border-radius:2px;"></div>
<svg class="s" style="left:980.3px;top:378.05px;" width="9" height="10" viewBox="0 0 9 10"><path d="M4.5 0 L9 2.5 V7.5 L4.5 10 L0 7.5 V2.5 Z" fill="#2260f5"/><path d="M2.6 3.6 L4.5 5 L6.4 3.6 M4.5 5 V7.2" stroke="#fff" stroke-width="0.9" fill="none"/></svg>
<div class="t" style="left:1001.00px;top:376.65px;font-size:9.33px;line-height:14px;color:#343b4d;font-weight:400;-webkit-text-stroke:0.2px #343b4d;">店长应用</div>
<svg class="s" style="left:1092.3px;top:382.35px;" width="8" height="2" viewBox="0 0 8 2"><circle cx="1" cy="1" r="0.85" fill="#2d3446"/><circle cx="3.8" cy="1" r="0.85" fill="#2d3446"/><circle cx="6.6" cy="1" r="0.85" fill="#2d3446"/></svg>
<div class="b" style="left:318px;top:439.0px;width:802px;height:0.7px;background:#ebedf0;border-radius:0px;"></div>
<div class="b" style="left:344.7px;top:410.25px;width:21px;height:21px;border-radius:50%;background:#f2f2f3;"></div>
<svg class="s" style="left:348.6px;top:414.55px;" width="13" height="12" viewBox="0 0 13 12"><rect x="6" y="0.2" width="1.3" height="1.4" fill="#c6c7c9"/><rect x="2.5" y="3" width="8.3" height="5.6" rx="0.5" fill="#c6c7c9"/><rect x="4.3" y="4.8" width="1.5" height="1.8" fill="#f2f2f3"/><rect x="7.6" y="4.8" width="1.5" height="1.8" fill="#f2f2f3"/><rect x="0.3" y="5" width="1.1" height="2" rx="0.3" fill="#c6c7c9"/><rect x="11.9" y="5" width="1.1" height="2" rx="0.3" fill="#c6c7c9"/><rect x="4" y="9.4" width="5.4" height="2.4" rx="0.5" fill="#c6c7c9"/></svg>
<div class="t" style="left:371.70px;top:414.15px;font-size:9.33px;line-height:14px;color:#343b4d;font-weight:400;-webkit-text-stroke:0.12px #343b4d;">人力资源</div>
<div class="b" style="left:498.4px;top:420.6px;width:3.1px;height:1.1px;background:#5a6172;border-radius:0px;"></div>
<div class="b" style="left:612.4000000000001px;top:420.6px;width:3.1px;height:1.1px;background:#5a6172;border-radius:0px;"></div>
<div class="t" style="left:783.40px;top:413.45px;font-size:9.33px;line-height:14px;color:#343b4d;font-weight:400;-webkit-text-stroke:0.06px #343b4d;"><span class="d">2023-07-13 15:30:45</span></div>
<div class="t" style="right:327.50px;top:414.15px;font-size:9.33px;line-height:14px;color:#343b4d;font-weight:400;-webkit-text-stroke:0.2px #343b4d;">1</div>
<div class="b" style="left:974.3px;top:410.15px;width:21.4px;height:21.2px;background:#e6edfd;border-radius:2px;"></div>
<svg class="s" style="left:980.3px;top:415.55px;" width="9" height="10" viewBox="0 0 9 10"><path d="M4.5 0 L9 2.5 V7.5 L4.5 10 L0 7.5 V2.5 Z" fill="#2260f5"/><path d="M2.6 3.6 L4.5 5 L6.4 3.6 M4.5 5 V7.2" stroke="#fff" stroke-width="0.9" fill="none"/></svg>
<div class="t" style="left:1001.00px;top:414.15px;font-size:9.33px;line-height:14px;color:#343b4d;font-weight:400;-webkit-text-stroke:0.2px #343b4d;">自建应用 2</div>
<svg class="s" style="left:1092.3px;top:419.85px;" width="8" height="2" viewBox="0 0 8 2"><circle cx="1" cy="1" r="0.85" fill="#2d3446"/><circle cx="3.8" cy="1" r="0.85" fill="#2d3446"/><circle cx="6.6" cy="1" r="0.85" fill="#2d3446"/></svg>
<div class="b" style="left:318px;top:476.5px;width:802px;height:0.7px;background:#ebedf0;border-radius:0px;"></div>
<div class="b" style="left:344.7px;top:447.75px;width:21px;height:21px;border-radius:50%;background:#f2f2f3;"></div>
<svg class="s" style="left:348.6px;top:452.05px;" width="13" height="12" viewBox="0 0 13 12"><rect x="6" y="0.2" width="1.3" height="1.4" fill="#c6c7c9"/><rect x="2.5" y="3" width="8.3" height="5.6" rx="0.5" fill="#c6c7c9"/><rect x="4.3" y="4.8" width="1.5" height="1.8" fill="#f2f2f3"/><rect x="7.6" y="4.8" width="1.5" height="1.8" fill="#f2f2f3"/><rect x="0.3" y="5" width="1.1" height="2" rx="0.3" fill="#c6c7c9"/><rect x="11.9" y="5" width="1.1" height="2" rx="0.3" fill="#c6c7c9"/><rect x="4" y="9.4" width="5.4" height="2.4" rx="0.5" fill="#c6c7c9"/></svg>
<div class="t" style="left:371.70px;top:451.65px;font-size:9.33px;line-height:14px;color:#343b4d;font-weight:400;-webkit-text-stroke:0.12px #343b4d;">计算 Data</div>
<div class="b" style="left:498.4px;top:458.1px;width:3.1px;height:1.1px;background:#5a6172;border-radius:0px;"></div>
<div class="b" style="left:612.4000000000001px;top:458.1px;width:3.1px;height:1.1px;background:#5a6172;border-radius:0px;"></div>
<div class="b" style="left:783.6px;top:458.1px;width:3.1px;height:1.1px;background:#5a6172;border-radius:0px;"></div>
<div class="b" style="left:949.2px;top:458.1px;width:3.1px;height:1.1px;background:#5a6172;border-radius:0px;"></div>
<div class="b" style="left:980.2px;top:458.1px;width:3.1px;height:1.1px;background:#5a6172;border-radius:0px;"></div>
<svg class="s" style="left:1092.3px;top:457.35px;" width="8" height="2" viewBox="0 0 8 2"><circle cx="1" cy="1" r="0.85" fill="#2d3446"/><circle cx="3.8" cy="1" r="0.85" fill="#2d3446"/><circle cx="6.6" cy="1" r="0.85" fill="#2d3446"/></svg>
<div class="b" style="left:318px;top:514.0px;width:802px;height:0.7px;background:#ebedf0;border-radius:0px;"></div>
<div class="b" style="left:344.7px;top:485.25px;width:21px;height:21px;border-radius:50%;background:#f2f2f3;"></div>
<svg class="s" style="left:348.6px;top:489.55px;" width="13" height="12" viewBox="0 0 13 12"><rect x="6" y="0.2" width="1.3" height="1.4" fill="#c6c7c9"/><rect x="2.5" y="3" width="8.3" height="5.6" rx="0.5" fill="#c6c7c9"/><rect x="4.3" y="4.8" width="1.5" height="1.8" fill="#f2f2f3"/><rect x="7.6" y="4.8" width="1.5" height="1.8" fill="#f2f2f3"/><rect x="0.3" y="5" width="1.1" height="2" rx="0.3" fill="#c6c7c9"/><rect x="11.9" y="5" width="1.1" height="2" rx="0.3" fill="#c6c7c9"/><rect x="4" y="9.4" width="5.4" height="2.4" rx="0.5" fill="#c6c7c9"/></svg>
<div class="t" style="left:371.70px;top:489.15px;font-size:9.33px;line-height:14px;color:#343b4d;font-weight:400;-webkit-text-stroke:0.12px #343b4d;">财务资产</div>
<div class="b" style="left:498.4px;top:495.6px;width:3.1px;height:1.1px;background:#5a6172;border-radius:0px;"></div>
<div class="b" style="left:612.4000000000001px;top:495.6px;width:3.1px;height:1.1px;background:#5a6172;border-radius:0px;"></div>
<div class="b" style="left:783.6px;top:495.6px;width:3.1px;height:1.1px;background:#5a6172;border-radius:0px;"></div>
<div class="b" style="left:949.2px;top:495.6px;width:3.1px;height:1.1px;background:#5a6172;border-radius:0px;"></div>
<div class="b" style="left:980.2px;top:495.6px;width:3.1px;height:1.1px;background:#5a6172;border-radius:0px;"></div>
<svg class="s" style="left:1092.3px;top:494.85px;" width="8" height="2" viewBox="0 0 8 2"><circle cx="1" cy="1" r="0.85" fill="#2d3446"/><circle cx="3.8" cy="1" r="0.85" fill="#2d3446"/><circle cx="6.6" cy="1" r="0.85" fill="#2d3446"/></svg>
<div class="b" style="left:326.4px;top:189.4px;width:9.2px;height:9.2px;border:1px solid #d4d6da;border-radius:1.5px;background:#fff;"></div>
<div class="b" style="left:326.3px;top:341px;width:9.2px;height:9.2px;border:1px solid #cfd2d6;border-radius:1.5px;background:#fff;"></div>
<div class="b" style="left:984.4px;top:598.75px;width:21.5px;height:21.25px;background:#e6ecfc;border-radius:2px;"></div>
<div class="t" style="left:992.50px;top:602.80px;font-size:9.33px;line-height:14px;color:#3f6fe8;font-weight:400;-webkit-text-stroke:0.2px #3f6fe8;">1</div>
<div class="b" style="left:1027.5px;top:598.75px;width:56.9px;height:21.25px;background:#f5f6f8;border-radius:2px;"></div>
<svg class="s" style="left:972px;top:607px;" width="4" height="5" viewBox="0 0 4 5"><path d="M3 0.5 L1 2.5 L3 4.5" stroke="#c4c7cc" stroke-width="0.9" fill="none"/></svg>
<svg class="s" style="left:1014.5px;top:607px;" width="4" height="5" viewBox="0 0 4 5"><path d="M1 0.5 L3 2.5 L1 4.5" stroke="#9aa0a8" stroke-width="0.9" fill="none"/></svg>
<svg class="s" style="left:1070.3px;top:607.5px;" width="6.5" height="4" viewBox="0 0 6.5 4"><path d="M0.6 0.6 L3.2 3.1 L5.8 0.6" stroke="#2d3446" stroke-width="1.2" fill="none"/></svg>
<div class="t" style="left:1036.50px;top:602.80px;font-size:9.33px;line-height:14px;color:#2d3446;font-weight:400;-webkit-text-stroke:0.2px #2d3446;">10 / 页</div>
<div class="t" style="left:1096.25px;top:602.80px;font-size:9.33px;line-height:14px;color:#2d3446;font-weight:400;-webkit-text-stroke:0.2px #2d3446;">1/1</div>
<div class="b" style="left:1028.75px;top:244px;width:74.75px;height:58.5px;background:#fff;border:1px solid #e8eaee;border-radius:4px;box-shadow:0 2px 8px rgba(0,0,0,0.08);"></div>
<svg class="s" style="left:1040px;top:256.7px;" width="9" height="9" viewBox="0 0 9 9"><circle cx="4.5" cy="4.5" r="4" stroke="#3f4659" stroke-width="1" fill="none"/><path d="M1.9 1.9 L7.1 7.1" stroke="#3f4659" stroke-width="1"/></svg>
<svg class="s" style="left:1040px;top:282px;" width="9" height="9.5" viewBox="0 0 9 9.5"><path d="M0.3 1 H8.7" stroke="#3f4659" stroke-width="1"/><path d="M3 0.5 H6" stroke="#3f4659" stroke-width="1.2"/><path d="M1.3 1.3 V8.9 H7.7 V1.3" stroke="#3f4659" stroke-width="1" fill="none"/><path d="M3.6 3.2 V6.8 M5.4 3.2 V6.8" stroke="#3f4659" stroke-width="0.9"/></svg>
<div class="t" style="left:1055.60px;top:254.90px;font-size:9.33px;line-height:14px;color:#555d6b;font-weight:400;-webkit-text-stroke:0.2px #555d6b;">禁用账号</div>
<div class="t" style="left:1055.60px;top:280.40px;font-size:9.33px;line-height:14px;color:#555d6b;font-weight:400;-webkit-text-stroke:0.2px #555d6b;">删除账号</div>
<div class="b" style="left:1022px;top:238.6px;width:90.2px;height:66.6px;border:2.9px solid #dc0012;"></div>
</div></body></html>
